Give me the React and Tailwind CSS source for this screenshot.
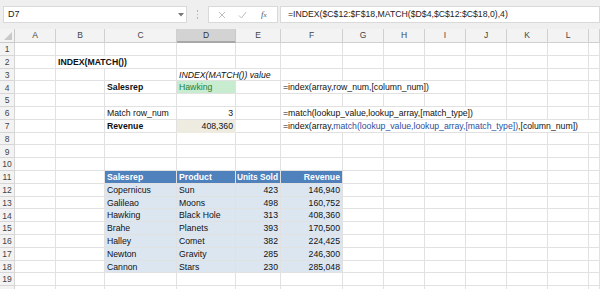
import React from "react";

const GRID =
  "grid grid-cols-[15px_41px_49px_72px_59px_45px_62px_41px_41px_41px_41px_41px_41px_11px]";
const LETTERS = ["A", "B", "C", "D", "E", "F", "G", "H", "I", "J", "K", "L", ""];

const head = "bg-[#4f81bd] border-[#4f81bd] text-white font-bold";
const body = "bg-[#dce6f1] border-[#dce6f1]";

const table = [
  ["Copernicus", "Sun", "423", "146,940"],
  ["Galileao", "Moons", "498", "160,752"],
  ["Hawking", "Black Hole", "313", "408,360"],
  ["Brahe", "Planets", "393", "170,500"],
  ["Halley", "Comet", "382", "224,425"],
  ["Newton", "Gravity", "285", "246,300"],
  ["Cannon", "Stars", "230", "285,048"],
];

// column index: A=0 ... M=12
const data = {
  2: { 1: { span: 2, c: "INDEX(MATCH())", cls: "font-bold" } },
  3: { 3: { span: 2, c: "INDEX(MATCH()) value", cls: "italic" } },
  4: {
    2: { c: "Salesrep", cls: "font-bold" },
    3: { c: "Hawking", cls: "bg-[#c8eccf] border-[#c8eccf] text-[#23803a]" },
    5: { span: 4, c: "=index(array,row_num,[column_num])" },
  },
  6: {
    2: { c: "Match row_num" },
    3: { c: "3", cls: "justify-end" },
    5: { span: 5, c: "=match(lookup_value,lookup_array,[match_type])" },
  },
  7: {
    2: { c: "Revenue", cls: "font-bold" },
    3: { c: "408,360", cls: "justify-end bg-[#eeebe1] border-[#eeebe1]" },
    5: {
      span: 8,
      c: (
        <>
          =index(array,
          <span className="text-[#2b4f9e]">match(lookup_value,lookup_array,[match_type])</span>
          ,[column_num])
        </>
      ),
    },
  },
  11: {
    2: { c: "Salesrep", cls: head },
    3: { c: "Product", cls: head },
    4: { c: "Units Sold", cls: head + " justify-end text-[8.3px]" },
    5: { c: "Revenue", cls: head + " justify-end" },
  },
};

table.forEach((r, i) => {
  data[12 + i] = {
    2: { c: r[0], cls: body },
    3: { c: r[1], cls: body },
    4: { c: r[2], cls: body + " justify-end" },
    5: { c: r[3], cls: body + " justify-end" },
  };
});

function Row({ n, label = true }) {
  const row = data[n] || {};
  const cells = [];
  let i = 0;
  while (i < 13) {
    const cell = row[i];
    const span = cell?.span || 1;
    cells.push(
      <div
        key={i}
        style={span > 1 ? { gridColumn: `span ${span}` } : undefined}
        className={`flex items-center pt-[1px] px-[2px] whitespace-nowrap overflow-visible border-r border-b border-[#e1e1e1] text-[#111] ${
          cell?.cls || ""
        }`}
      >
        {cell?.c}
      </div>
    );
    i += span;
  }
  return (
    <div className={`${GRID} h-[12.8px]`}>
      <div className="flex items-center justify-center pt-[1px] bg-[#f3f3f3] border-r border-b border-[#d6d6d6] text-[#444] text-[8.5px]">
        {label ? n : null}
      </div>
      {cells}
    </div>
  );
}

export default function App() {
  const rows = Array.from({ length: 19 }, (_, i) => i + 1);
  return (
    <div className="w-[600px] h-[289px] overflow-hidden bg-white font-['Liberation_Sans',Arial,sans-serif] text-[8.7px] leading-none">
      {/* formula bar */}
      <div className="h-[29px] bg-[#efefef] flex items-center">
        <div className="ml-[3px] w-[184px] h-[17px] bg-white border border-[#d9d9d9] flex items-center pl-[4px] text-[9px] text-[#222] relative">
          D7
          <svg className="absolute right-[2px] top-[6px]" width="6" height="4" viewBox="0 0 6 4">
            <path d="M0 0h6L3 3.5z" fill="#777" />
          </svg>
        </div>
        <div className="w-[21px] flex flex-col items-center gap-[2px]">
          <span className="w-[1.5px] h-[1.5px] bg-[#b5b5b5]" />
          <span className="w-[1.5px] h-[1.5px] bg-[#b5b5b5]" />
          <span className="w-[1.5px] h-[1.5px] bg-[#b5b5b5]" />
        </div>
        <div className="w-[70px] h-[17px] bg-white border border-[#d9d9d9] flex items-center">
          <svg className="ml-[9px]" width="8" height="8" viewBox="0 0 8 8">
            <path d="M1 1l6 6M7 1L1 7" stroke="#bdbdbd" strokeWidth="1" />
          </svg>
          <svg className="ml-[12px]" width="9" height="8" viewBox="0 0 9 8">
            <path d="M1 4.5l2.5 2.5L8 1" stroke="#bdbdbd" strokeWidth="1" fill="none" />
          </svg>
          <span className="ml-[14px] font-['Liberation_Serif',serif] italic text-[9px] text-[#555]">
            f<span className="text-[7px]">x</span>
          </span>
        </div>
        <div className="ml-[2px] flex-1 h-[17px] bg-white border border-[#d9d9d9] flex items-center pl-[7px] text-[#222] text-[8.7px] whitespace-nowrap">
          =INDEX($C$12:$F$18,MATCH($D$4,$C$12:$C$18,0),4)
        </div>
      </div>

      {/* column headers */}
      <div className={`${GRID} h-[14px]`}>
        <div className="relative bg-[#f3f3f3] border-r border-b border-[#c9c9c9]">
          <svg className="absolute right-[2px] bottom-[2px]" width="8" height="8" viewBox="0 0 8 8">
            <path d="M8 0v8H0z" fill="#c9c9c9" />
          </svg>
        </div>
        {LETTERS.map((l, i) => (
          <div
            key={i}
            className={`flex items-center justify-center text-[8.5px] border-r ${
              l === "D"
                ? "bg-[#d3d3d3] border-b-2 border-b-[#a8a8a8] border-r-[#c9c9c9] text-[#333]"
                : "bg-[#f3f3f3] border-b border-[#d0d0d0] text-[#444]"
            }`}
          >
            {l}
          </div>
        ))}
      </div>

      {rows.map((n) => (
        <Row key={n} n={n} />
      ))}
      <Row n={20} label={false} />
    </div>
  );
}
